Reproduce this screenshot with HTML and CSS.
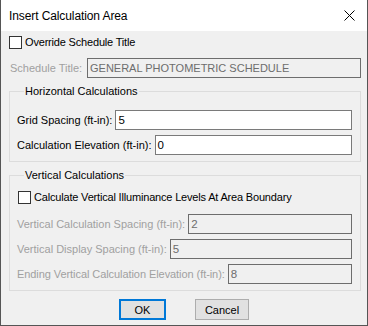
FILE: index.html
```html
<!DOCTYPE html>
<html>
<head>
<meta charset="utf-8">
<link rel="stylesheet" href="styles.css">
</head>
<body>
<div class="window">
  <div class="titlebar">
    <span class="title">Insert Calculation Area</span>
    <svg class="close" width="11" height="11" viewBox="0 0 11 11"><path d="M0.5 0.5 L10.5 10.5 M10.5 0.5 L0.5 10.5" stroke="#000" stroke-width="1" fill="none"/></svg>
  </div>
  <div class="body">
    <div class="check-row top-check"><span class="box"></span><span class="check-text">Override Schedule Title</span></div>
    <div class="field-row sched-row disabled"><span class="label">Schedule Title:</span><span class="input">GENERAL PHOTOMETRIC SCHEDULE</span></div>

    <fieldset class="group group-h">
      <legend>Horizontal Calculations</legend>
      <div class="field-row"><span class="label">Grid Spacing (ft-in):</span><span class="input">5</span></div>
      <div class="field-row"><span class="label">Calculation Elevation (ft-in):</span><span class="input">0</span></div>
    </fieldset>

    <fieldset class="group group-v">
      <legend>Vertical Calculations</legend>
      <div class="check-row inner-check"><span class="box"></span><span class="check-text">Calculate Vertical Illuminance Levels At Area Boundary</span></div>
      <div class="field-row disabled first-v"><span class="label">Vertical Calculation Spacing (ft-in):</span><span class="input">2</span></div>
      <div class="field-row disabled"><span class="label">Vertical Display Spacing (ft-in):</span><span class="input">5</span></div>
      <div class="field-row disabled"><span class="label label-tight">Ending Vertical Calculation Elevation (ft-in):</span><span class="input">8</span></div>
    </fieldset>

    <div class="buttons">
      <span class="btn btn-default">OK</span>
      <span class="btn">Cancel</span>
    </div>
  </div>
</div>
</body>
</html>
```

FILE: styles.css
```css
* { box-sizing: border-box; }
html, body { margin: 0; padding: 0; background: #fff; }
body { font-family: "Liberation Sans", Arial, sans-serif; font-size: 11px; color: #000; }

.window {
  width: 368px;
  height: 326px;
  border-left: 1px solid #555;
  border-right: 1px solid #555;
  border-bottom: 1px solid #555;
  display: flex;
  flex-direction: column;
  background: #f0f0f0;
}

.titlebar {
  height: 31px;
  background: #fff;
  display: flex;
  align-items: center;
  justify-content: space-between;
  padding: 0 12px 0 8px;
  flex: none;
}
.title { font-family: "Liberation Sans", Arial, sans-serif; font-size: 12px; letter-spacing: -0.1px; color: #000; padding-top: 1px; }
.close { display: block; }

.body { padding: 0 6px 0 8px; }

.check-row { display: flex; align-items: center; height: 13px; line-height: 13px; gap: 3px; }
.check-text { letter-spacing: -0.18px; white-space: nowrap; }
.top-check { margin-top: 5px; }
.box { width: 13px; height: 13px; border: 1px solid #333; background: #fff; flex: none; }

.field-row { display: flex; align-items: center; height: 20px; gap: 3px; }
.field-row + .field-row { margin-top: 5px; }
.label { white-space: nowrap; flex: none; }
.label-tight { letter-spacing: -0.07px; }
.input {
  flex: 1;
  height: 20px;
  border: 1px solid #7a7a7a;
  background: #fff;
  padding: 0 2px;
  line-height: 18px;
  font-size: 11.5px;
  white-space: nowrap;
  overflow: hidden;
}
.disabled .label { color: #a0a0a0; }
.disabled .input { background: #f0f0f0; border-color: #6d6d6d; color: #6d6d6d; }

.sched-row { margin-top: 9px; padding-left: 1px; }
.sched-row .label { width: 74px; }
.sched-row .input { font-size: 11px; }

.group {
  margin: 7px 0 0 0;
  padding: 0 8px 6px 7px;
  border: 1px solid #dcdcdc;
  min-width: 0;
}
.group legend {
  margin-left: 7px;
  padding: 0 1px;
  height: 13px;
  line-height: 13px;
  font-size: 11px;
}
.group-h legend + .field-row { margin-top: 12px; }
.inner-check { margin-top: 9px; padding-left: 1px; }
.first-v { margin-top: 10px; }

.buttons { display: flex; justify-content: center; gap: 29px; margin-top: 8px; padding-right: 2px; }
.btn {
  height: 21px;
  border: 1px solid #adadad;
  background: #e1e1e1;
  display: flex;
  align-items: center;
  justify-content: center;
  font-size: 11px;
  width: 54px;
}
.btn-default { border: 2px solid #0078d7; width: 47px; }
```
